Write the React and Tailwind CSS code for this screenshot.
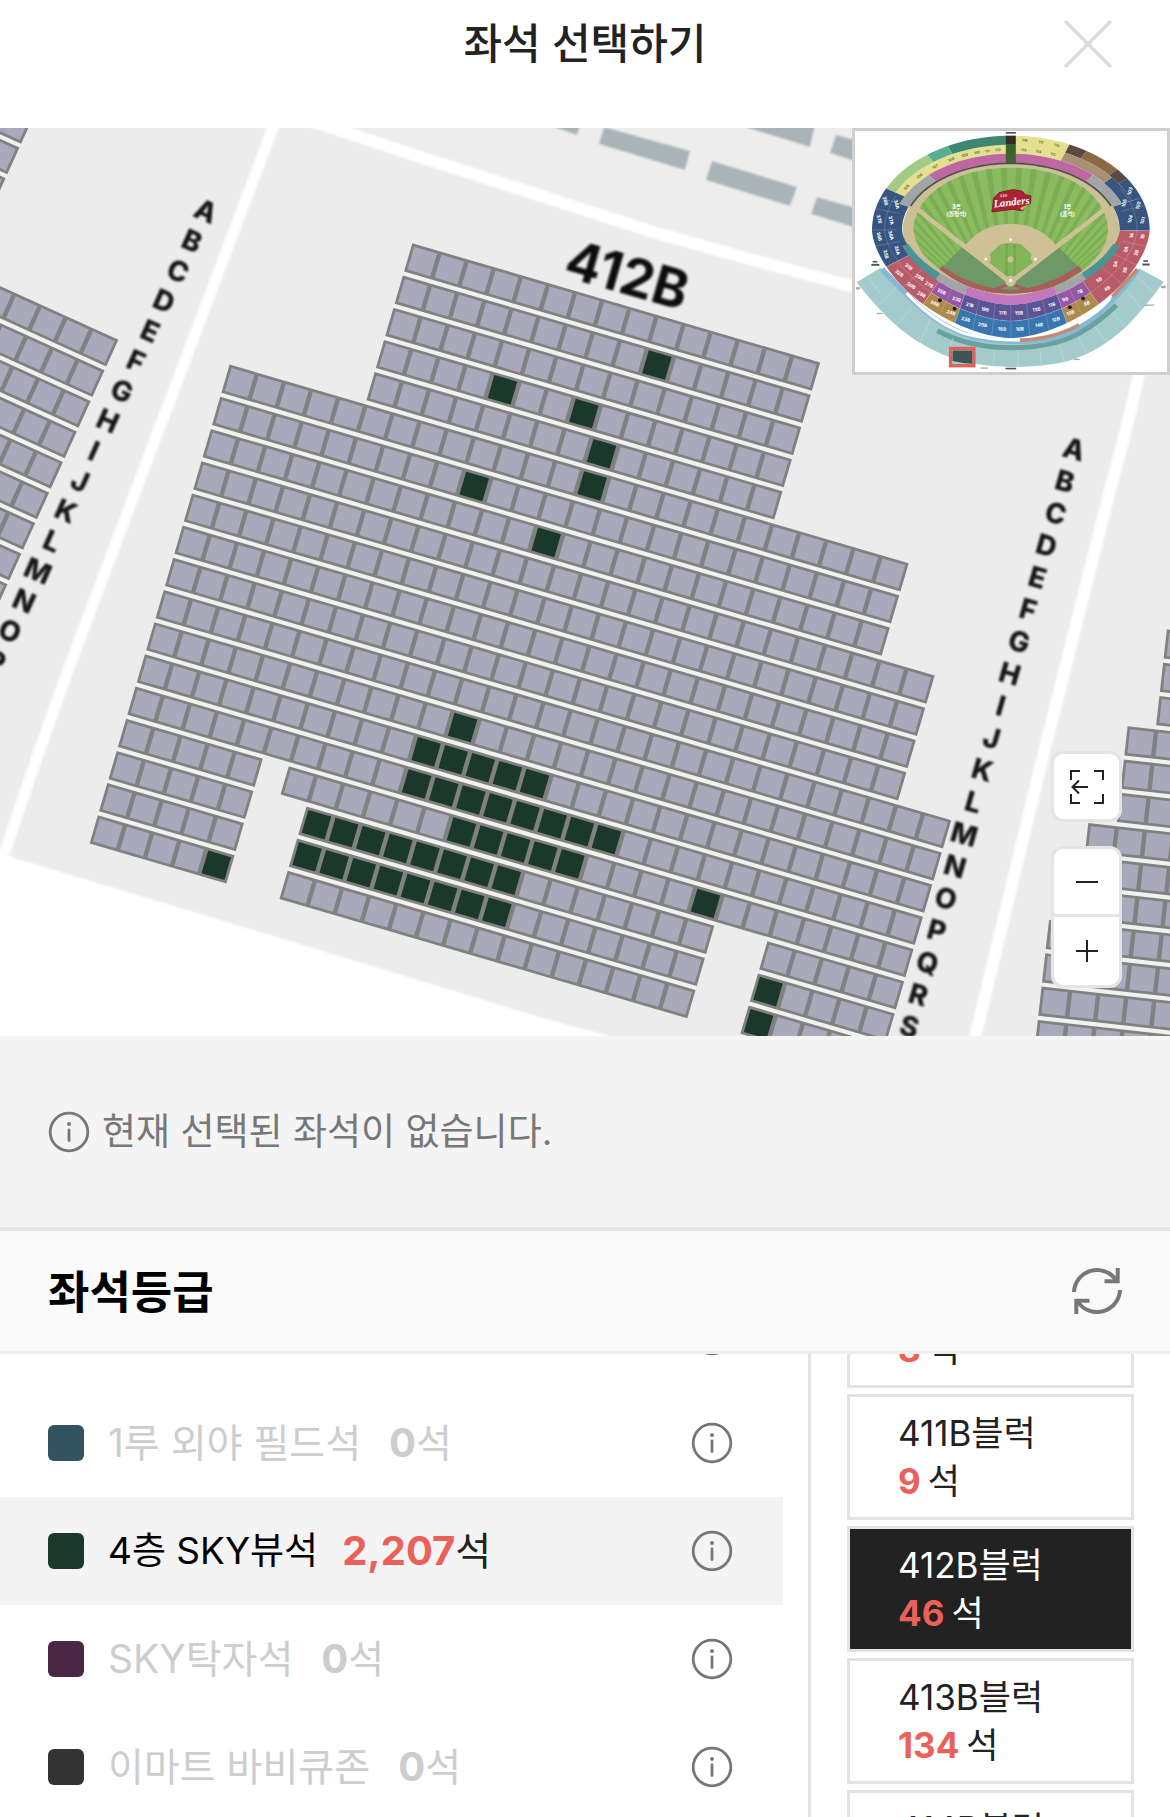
import React from "react";

const FONT = "font-[Inter,'Noto_Sans_CJK_KR',sans-serif]";

/* ---------- seat map ---------- */

const PITCH = 28.25;
const ROW = 33.54;
const SEAT = 29.4;

const range = (a, b) => Array.from({ length: b - a }, (_, i) => a + i);

const mainRows = range(0, 20).map((r) => {
  if (r < 5) return [[0, 15]];
  if (r < 8) return [[-5, 20]];
  if (r < 12) return [[-5, 22]];
  if (r < 16) return [[-5, 24]];
  if (r === 16) return [[-5, 0], [1, 24]];
  return [[-5, 0], [2, 17], [19, 24]];
});

const openSeats = {
  1: [9],
  3: [4, 7],
  4: [8],
  5: [8],
  6: [4],
  7: [7],
  13: [6],
  14: range(5, 10),
  15: range(5, 13),
  16: [...range(7, 12), 16],
  17: range(2, 10),
  18: [...range(2, 10), 19],
  19: [-1, 19],
};

const leftRows = range(-5, 10).map((r) => (r < 0 ? [[-14, -6]] : [[-14, 0]]));
const rightRows = range(-3, 11).map((r) => {
  if (r < 0) return [[1, 5]];
  if (r < 3) return [[0, 6]];
  if (r < 6) return [[-1, 6]];
  return [[-2, 7]];
});

function SeatBlock({ x, y, angle, rows, firstRow = 0, open = {} }) {
  return (
    <g transform={`translate(${x} ${y}) rotate(${angle})`}>
      {rows.map((segs, i) => {
        const r = firstRow + i;
        const next = rows[i + 1] || [];
        return segs.map(([a, b]) => (
          <g key={`${r}:${a}`}>
            {next.map(([c, d]) => {
              const s = Math.max(a, c);
              const e = Math.min(b, d);
              return e > s ? (
                <rect key={c} x={s * PITCH} y={r * ROW + 28} width={(e - s) * PITCH + 1} height={7} fill="#f1f1ef" />
              ) : null;
            })}
            <rect x={a * PITCH} y={r * ROW} width={(b - a) * PITCH + 1.2} height={SEAT} fill="#818181" />
            {range(a, b).map((c) => (
              <rect
                key={c}
                x={c * PITCH + 2.8}
                y={r * ROW + 2.8}
                width={SEAT - 5.6}
                height={SEAT - 5.6}
                fill={(open[r] || []).includes(c) ? "#1b392b" : "#a8aabc"}
              />
            ))}
          </g>
        ));
      })}
    </g>
  );
}

function RowLetters({ letters, x, y, dx, dy, angle }) {
  return letters.split("").map((ch, i) => (
    <text
      key={ch}
      transform={`translate(${x + dx * i} ${y + dy * i}) rotate(${angle})`}
      textAnchor="middle"
      y="10"
      fontSize="28"
      fontWeight="800"
      fill="#161616"
    >
      {ch}
    </text>
  ));
}

function SeatMap() {
  return (
    <svg viewBox="0 128 1170 908" className="block h-auto w-full" fontFamily="Inter, sans-serif" role="img" aria-label="412B">
      <defs>
        <filter id="soft" x="-5%" y="-5%" width="110%" height="110%">
          <feGaussianBlur stdDeviation="0.9" />
        </filter>
      </defs>
      <rect x="0" y="128" width="1170" height="908" fill="#ececec" />
      <g filter="url(#soft)">
        <path d="M300 118 L420 157 L570 204 L851 284 L1200 370 L1200 100 Z" fill="#ededed" />
        <path d="M-20 838 Q2 850 14 858 L240 926 L500 1005 Q560 1024 625 1040 L625 1060 L-20 1060 Z" fill="#fff" />
        <g fill="none" stroke="#fff">
          <path d="M276 120 L102 580 Q50 715 5 852" strokeWidth="11" />
          <path d="M290 114 L420 157 L520 189 L653 232 L753 260 L870 291" strokeWidth="12" />
          <path d="M1140 370 Q1128 425 1110 490 L1043 756 L972 1050" strokeWidth="12" />
        </g>
        <g fill="#a9b4b8">
          <path d="M540 122 L580 126 L577 135 Z" />
          <path d="M604 127 L690 151 L685 170 L599 144 Z" />
          <path d="M712 161 L797 187 L790 206 L706 180 Z" />
          <path d="M817 197 L870 212 L870 232 L811 214 Z" />
          <path d="M735 120 L815 124 L810 147 L748 128 Z" />
          <path d="M836 135 L870 144 L870 166 L830 153 Z" />
        </g>
      </g>
      <SeatBlock x={412.3} y={243.3} angle={16.3} rows={mainRows} open={openSeats} />
      <SeatBlock x={117.3} y={339.3} angle={24.4} rows={leftRows} firstRow={-5} />
      <SeatBlock x={1127.6} y={726.2} angle={6.4} rows={rightRows} firstRow={-3} />
      <g filter="url(#soft)">
        <RowLetters letters="ABCDEFGHIJKLMNOP" x={206} y={211} dx={-14} dy={30} angle={24} />
        <RowLetters letters="ABCDEFGHIJKLMNOPQRS" x={1074} y={449} dx={-9.15} dy={32.1} angle={16} />
        <text transform="translate(562 276) rotate(16)" fontSize="53" fontWeight="700" fill="#0c0c0c">
          412B
        </text>
      </g>
    </svg>
  );
}

/* ---------- stadium overview ---------- */

const CX = 513;
const CY = 330;

function at(t, deg) {
  const a = (deg * Math.PI) / 180;
  const c = Math.cos(a);
  const s = Math.sin(a);
  const rx = 322 + 95 * t;
  if (s < 0) return [CX + rx * c, CY + (200 + 83 * t) * s];
  return [CX + rx * Math.sign(c) * Math.abs(c) ** 1.2, CY + (197 + 128 * t) * s ** 1.2];
}

function ring(t0, t1, from, to) {
  const n = Math.max(2, Math.ceil(Math.abs(to - from) / 3));
  const steps = range(0, n + 1).map((i) => from + ((to - from) * i) / n);
  const pts = [...steps.map((d) => at(t1, d)), ...steps.reverse().map((d) => at(t0, d))];
  return pts.map((p) => p.map((v) => v.toFixed(1)).join(",")).join(" ");
}

const sectors = [
  [0.35, 0.67, -154, -92, "#e3e18d"],
  [0.67, 1, -154, -127, "#a5ca86"],
  [0.67, 1, -127, -117, "#58ae90"],
  [0.67, 1, -117, -92, "#3f8573"],
  [0.35, 1, -88, -65, "#e3e18d"],
  [0.67, 1, -65, -57, "#5a4a42"],
  [0.67, 1, -57, -40, "#8b6a43"],
  [0.67, 1, -40, -33, "#5a4a42"],
  [0.35, 0.67, -65, -38, "#a98f73"],
  [0.02, 0.35, -134, -92, "#bf67a2"],
  [0.02, 0.35, -88, -46, "#bf67a2"],
  [0.02, 0.35, -160, -134, "#a2a4a8"],
  [0.02, 0.35, -46, -20, "#a2a4a8"],
  [0.35, 1, 200, 206, "#37557f"],
  [0.05, 1, 156, 200, "#37557f"],
  [0.35, 0.67, -38, -20, "#37557f"],
  [0.67, 1, -33, -20, "#37557f"],
  [0.05, 1, -20, 1, "#37557f"],
  [0.05, 1, 1, 47, "#b85c69"],
  [0.05, 1, 133, 156, "#b85c69"],
  [0, 0.22, 16, 45, "#4a9494"],
  [0, 0.22, 135, 164, "#4a9494"],
  [0, 0.22, 45, 62, "#a2a4a8"],
  [0, 0.22, 118, 135, "#a2a4a8"],
  [0, 0.22, 62, 118, "#c477bc"],
  [0.22, 0.6, 47, 62, "#9657a6"],
  [0.22, 0.6, 118, 133, "#9657a6"],
  [0.22, 0.6, 62, 118, "#5b5496"],
  [0.6, 1, 47, 62, "#ae8b4d"],
  [0.6, 1, 118, 133, "#ae8b4d"],
  [0.6, 1, 62, 118, "#3a76ae"],
];

const spokes = [-15, 1, 12, 23, 34, 47, 55, 62, 70, 79, 90, 101, 110, 118, 125, 133, 144, 156, 168, 180, 193];

const overviewLabels = [
  ["22B", 0.8, 114], ["20B", 0.8, 106], ["18B", 0.8, 96], ["16B", 0.8, 84], ["14B", 0.8, 74], ["12B", 0.8, 66],
  ["21B", 0.42, 114], ["19B", 0.42, 106], ["17B", 0.42, 96], ["15B", 0.42, 84], ["13B", 0.42, 74], ["11B", 0.42, 66],
  ["26B", 0.8, 129], ["24B", 0.8, 121], ["10B", 0.8, 59], ["8B", 0.8, 51],
  ["25B", 0.42, 129], ["23B", 0.42, 121], ["9B", 0.42, 59], ["7B", 0.42, 51],
  ["32B", 0.8, 150], ["30B", 0.8, 142], ["28B", 0.8, 136], ["31B", 0.45, 150], ["29B", 0.45, 142], ["27B", 0.45, 136],
  ["1B", 0.8, 6], ["2B", 0.8, 17], ["3B", 0.8, 28], ["4B", 0.8, 40], ["1A", 0.45, 6], ["2A", 0.45, 17], ["3A", 0.45, 28], ["5B", 0.45, 40],
  ["35B", 0.8, 162], ["36B", 0.8, 174], ["37B", 0.8, 187], ["38B", 0.8, 199], ["35A", 0.42, 162], ["36A", 0.42, 174], ["37A", 0.42, 187], ["38A", 0.42, 199],
  ["101", 0.8, -6], ["102", 0.8, -16], ["103", 0.8, -26], ["104", 0.42, -8], ["105", 0.42, -20],
];

const yellowLabels = [
  ["105", 0.5, -148], ["106", 0.5, -138], ["107", 0.5, -128], ["108", 0.5, -119], ["109", 0.5, -112], ["110", 0.5, -106],
  ["111", 0.5, -101], ["112", 0.5, -96], ["113", 0.5, -84], ["114", 0.5, -77], ["115", 0.5, -70],
  ["116", 0.85, -84], ["117", 0.85, -77], ["118", 0.85, -70],
];

function Overview() {
  const grass =
    "M221 330 C222 230 340 143 512 143 C690 143 804 230 805 330 C800 390 760 430 712 465 C650 505 590 520 512 522 C430 520 370 500 315 460 C265 425 228 390 221 330 Z";
  return (
    <svg viewBox="45 33 937 723" className="block h-auto w-full" fontFamily="Inter, 'Noto Sans CJK KR', sans-serif" textAnchor="middle" role="img" aria-label="Landers">
      <defs>
        <clipPath id="grassClip">
          <path d={grass} />
        </clipPath>
      </defs>
      <path
        d="M50 487 L122 444 Q160 480 205 525 Q300 615 380 645 Q450 670 540 668 Q640 664 700 640 Q780 600 830 535 L898 445 L972 486 Q920 560 860 620 Q770 705 660 730 Q590 742 512 742 Q400 740 310 705 Q220 668 150 600 Q90 540 50 487 Z"
        fill="#a3cbcb"
      />
      <g fill="none">
        <path d="M126 448 Q170 495 215 538 Q300 622 395 650 Q450 665 540 665 Q640 662 700 634 Q790 590 895 450" stroke="#86b9d6" strokeWidth="16" />
        <path d="M540 662 Q650 655 718 615 M818 530 L893 448" stroke="#c28b75" strokeWidth="11" />
        <path d="M292 633 Q390 684 512 684 Q640 684 720 640 Q780 605 830 556" stroke="#6aa19f" strokeWidth="15" />
        <path d="M200 520 Q290 615 380 643 Q450 662 540 661" stroke="#fff" strokeWidth="9" />
        <path d="M720 608 Q780 575 812 535" stroke="#fff" strokeWidth="9" />
        <path
          d="M80 465 L120 520 M110 560 L170 500 M170 615 L215 565 M240 670 L270 600 M318 706 L340 655 M390 730 L400 680 M460 740 L465 690 M535 742 L535 690 M605 738 L600 690 M675 727 L660 680 M740 700 L715 655 M800 665 L765 620 M855 620 L820 580 M905 565 L860 510 M945 520 L890 470"
          stroke="#c1dddd"
          strokeWidth="2"
        />
      </g>
      <path d="M192 330 C195 220 330 133 512 133 C700 133 832 220 835 330 C830 400 790 440 730 480 C650 525 590 530 512 530 C430 530 360 510 300 470 C240 430 195 400 192 330 Z" fill="#cbbf96" stroke="#cbbf96" strokeWidth="8" />
      <path d={grass} fill="#8abb5f" />
      <g clipPath="url(#grassClip)">
        {range(0, 26).map((i) => (
          <path key={i} d={`M${-120 + i * 50} 100 l20 0 L512 620 Z`} fill="#7aae54" />
        ))}
        <path d="M368 380 L300 450 L420 525 L512 530 L620 525 L725 450 L655 380 L512 490 Z" fill="#6f9867" />
        <path d="M300 445 Q400 515 512 520 Q620 515 722 445" fill="none" stroke="#a85f5b" strokeWidth="18" />
        <path d="M512 490 L440 520 M512 490 L585 520" stroke="#a85f5b" strokeWidth="10" />
      </g>
      <path d="M375 378 Q425 312 512 312 Q600 312 650 378 L512 492 Z" fill="#cfc197" />
      <path d="M232 268 L512 488 L795 268" fill="none" stroke="#cfc197" strokeWidth="14" />
      <path d="M482 373 Q512 366 544 373 L576 404 Q568 416 580 428 L512 478 L448 428 Q458 416 448 404 Z" fill="#84b659" />
      <path d="M500 372 V466 M524 372 V466" stroke="#76a94f" strokeWidth="8" />
      <circle cx="512" cy="419" r="9" fill="#cfc197" />
      <circle cx="512" cy="484" r="16" fill="#cfc197" />
      <g fill="#fff">
        <circle cx="512" cy="359" r="4" />
        <circle cx="438" cy="418" r="4" />
        <circle cx="587" cy="418" r="4" />
        <circle cx="512" cy="482" r="5" />
      </g>
      {sectors.map(([a, b, c, d, fill]) => (
        <polygon key={`${a}:${b}:${c}`} points={ring(a, b, c, d)} fill={fill} />
      ))}
      <g stroke="#fff" strokeOpacity="0.35" strokeWidth="1.5">
        {spokes.map((d) => {
          const [x1, y1] = at(0.22, d);
          const [x2, y2] = at(1, d);
          return <line key={d} x1={x1} y1={y1} x2={x2} y2={y2} />;
        })}
        <polyline points={range(-10, 69).map((i) => at(0.6, i * 3).join(",")).join(" ")} fill="none" />
      </g>
      <rect x="498" y="47" width="30" height="26" fill="#332b28" />
      <rect x="498" y="72" width="30" height="58" fill="#3d6429" />
      <polyline points={range(-53, -6).map((i) => at(0, i * 3).join(",")).join(" ")} fill="none" stroke="#44564a" strokeWidth="5" />
      {overviewLabels.map(([s, t, d]) => {
        const [x, y] = at(t, d);
        const side = d > 150 || d < 35;
        const rot = side ? (d > 90 ? 75 : -75) : (90 - d) * -0.6;
        return (
          <text key={s + t} transform={`translate(${x} ${y}) rotate(${rot})`} y="5" fontSize="14" fontWeight="700" fill="#fff">
            {s}
          </text>
        );
      })}
      {yellowLabels.map(([s, t, d]) => {
        const [x, y] = at(t, d);
        return (
          <text key={s} transform={`translate(${x} ${y}) rotate(${(d + 90) * 0.8})`} y="4" fontSize="11" fontWeight="700" fill="#6b6a3c">
            {s}
          </text>
        );
      })}
      <g fill="#222">
        <circle cx="300" cy="541" r="6" />
        <circle cx="344" cy="567" r="6" />
        <circle cx="730" cy="536" r="6" />
        <circle cx="690" cy="562" r="6" />
      </g>
      <g fill="#fff" fontSize="17" fontWeight="700">
        <text x="350" y="268">3루</text>
        <text x="350" y="289">(원정석)</text>
        <text x="683" y="268">1루</text>
        <text x="683" y="289">(홈석)</text>
      </g>
      <path d="M460 236 L478 218 L520 209 L548 214 L556 224 L573 228 L572 250 L556 256 L549 273 L520 268 L456 276 L460 250 Z" fill="#a92432" stroke="#8c1c2b" strokeWidth="3" />
      <text transform="translate(516 257) rotate(-6)" fontFamily="'Liberation Serif', serif" fontSize="32" fontWeight="700" fontStyle="italic" fill="#fff">
        Landers
      </text>
      <text transform="translate(492 231) rotate(-6)" fontSize="11" fontWeight="700" fill="#f0c8c8">
        SSG
      </text>
      <path d="M540 264 L560 256 L548 272 Z" fill="#e7bb5a" />
      <g fill="#555">
        <rect x="498" y="36" width="30" height="5" />
        <rect x="98" y="423" width="14" height="5" />
        <rect x="94" y="432" width="24" height="6" />
        <rect x="911" y="421" width="14" height="5" />
        <rect x="908" y="431" width="22" height="6" />
        <rect x="497" y="744" width="32" height="5" />
      </g>
      <g fill="#aaa">
        <rect x="48" y="502" width="12" height="7" />
        <rect x="964" y="498" width="14" height="7" />
        <rect x="916" y="554" width="28" height="4" />
        <rect x="110" y="579" width="18" height="4" />
        <rect x="702" y="717" width="18" height="4" />
        <rect x="422" y="743" width="22" height="4" />
      </g>
      <rect x="332" y="686" width="70" height="52" fill="#a3cbcb" stroke="#e2605a" strokeWidth="10" />
      <path d="M338 692 H397 V732 L370 730 L338 724 Z" fill="#3e5455" />
    </svg>
  );
}

/* ---------- icons ---------- */

function InfoIcon() {
  return (
    <svg viewBox="0 0 42 42" className="size-[42px] shrink-0" fill="none" stroke="#777" strokeLinecap="round" aria-hidden="true">
      <circle cx="21" cy="21" r="18.8" strokeWidth="2.8" />
      <path d="M21 19 V29.5" strokeWidth="2.8" />
      <circle cx="21" cy="13" r="2" fill="#777" stroke="none" />
    </svg>
  );
}

function CloseIcon() {
  return (
    <svg viewBox="0 0 48 48" className="size-12" fill="none" stroke="#dcdcdc" strokeWidth="3.5" aria-hidden="true">
      <path d="M1 1 L47 47 M47 1 L1 47" />
    </svg>
  );
}

function RefreshIcon() {
  return (
    <svg viewBox="0 0 50 50" className="size-[50px]" fill="none" stroke="#777" strokeWidth="4" aria-hidden="true">
      <path d="M2 26 A23 23 0 0 1 44 14" />
      <path d="M32.5 15.2 H45.7 V2" />
      <path d="M48 24 A23 23 0 0 1 6 36" />
      <path d="M17.5 34.8 H4.3 V48" />
    </svg>
  );
}

function FitIcon() {
  return (
    <svg viewBox="0 0 34 34" className="size-[34px]" fill="none" stroke="#222" strokeWidth="2" aria-hidden="true">
      <path d="M1 10 V1 H10 M24 1 H33 V10 M33 24 V33 H24 M10 33 H1 V24" />
      <path d="M18 17 H2.5 M9 10.5 L2.5 17 L9 23.5" />
    </svg>
  );
}

/* ---------- lists ---------- */

const grades = [
  { name: "3루 외야 필드석", count: "0", color: "bg-[#6b4a2f]" },
  { name: "1루 외야 필드석", count: "0", color: "bg-[#335362]" },
  { name: "4층 SKY뷰석", count: "2,207", color: "bg-[#1b392b]", active: true },
  { name: "SKY탁자석", count: "0", color: "bg-[#4b2746]" },
  { name: "이마트 바비큐존", count: "0", color: "bg-[#333333]" },
];

const blocks = [
  { name: "410B블럭", count: 8 },
  { name: "411B블럭", count: 9 },
  { name: "412B블럭", count: 46, active: true },
  { name: "413B블럭", count: 134 },
  { name: "414B블럭", count: 120 },
];

function GradeRow({ name, count, color, active }) {
  return (
    <li className={`flex h-[108px] items-center pl-12 pr-[50px] ${active ? "bg-[#f4f4f4]" : ""}`}>
      <button type="button" className="flex min-w-0 flex-1 items-center text-left leading-[48px]">
        <span className={`size-9 shrink-0 rounded-md ${color}`} />
        <span className={`ml-6 ${active ? "text-[37px] text-black" : "text-[39px] text-[#cdcdcd]"}`}>{name}</span>
        <span className={`text-[40px] ${active ? "ml-6 text-[#222]" : "ml-7 text-[#cdcdcd]"}`}>
          <strong className={`font-bold ${active ? "text-[#eb6159]" : ""}`}>{count}</strong>
          <span className="text-[39px]">석</span>
        </span>
      </button>
      <button type="button" aria-label={`${name} 정보`}>
        <InfoIcon />
      </button>
    </li>
  );
}

function BlockCard({ name, count, active }) {
  return (
    <button
      type="button"
      aria-pressed={!!active}
      className={`block w-full shrink-0 border-[3px] border-[#e3e3e3] py-3 pl-12 text-left text-[35px] leading-[48px] ${
        active ? "bg-[#222] text-white" : "bg-white text-[#222]"
      }`}
    >
      <span className="block">{name}</span>
      <span className="flex gap-[7px]">
        <strong className="font-bold text-[#eb6159]">{count}</strong>
        <span>석</span>
      </span>
    </button>
  );
}

export default function App() {
  return (
    <div className={`flex h-screen flex-col overflow-hidden bg-white text-[#222] ${FONT}`}>
      <header className="grid h-32 shrink-0 grid-cols-[1fr_auto_1fr] items-start px-[58px]">
        <h1 className="col-start-2 mt-3.5 text-[42px] font-medium leading-[60px]">좌석 선택하기</h1>
        <button type="button" aria-label="닫기" className="mt-5 justify-self-end">
          <CloseIcon />
        </button>
      </header>

      <section className="relative shrink-0 overflow-hidden">
        <SeatMap />
        <div className="absolute right-0 top-0 w-[318px] border-[3px] border-[#cfcfcf] bg-white">
          <Overview />
        </div>
        <div className="absolute bottom-12 right-12 flex w-[71px] flex-col gap-6">
          <button
            type="button"
            aria-label="전체 보기"
            className="flex h-[71px] items-center justify-center rounded-xl border-[3px] border-[#e4e4e4] bg-white"
          >
            <FitIcon />
          </button>
          <div className="flex flex-col rounded-xl border-[3px] border-[#e4e4e4] bg-white">
            <button type="button" aria-label="축소" className="flex h-[68px] items-center justify-center border-b-[3px] border-[#e4e4e4]">
              <svg viewBox="0 0 22 22" className="size-[22px]" stroke="#222" strokeWidth="2" aria-hidden="true">
                <path d="M0 11 H22" />
              </svg>
            </button>
            <button type="button" aria-label="확대" className="flex h-[68px] items-center justify-center">
              <svg viewBox="0 0 22 22" className="size-[22px]" stroke="#222" strokeWidth="2" aria-hidden="true">
                <path d="M0 11 H22 M11 0 V22" />
              </svg>
            </button>
          </div>
        </div>
      </section>

      <section className="flex h-[195px] shrink-0 items-center gap-3 border-b-[4px] border-[#e5e5e5] bg-[#f4f4f4] px-12 text-[37px] text-[#777]">
        <InfoIcon />
        <p>현재 선택된 좌석이 없습니다.</p>
      </section>

      <section className="flex h-[123px] shrink-0 items-center justify-between border-b-[3px] border-[#eee] bg-[#fafafa] px-12">
        <h2 className="pt-1 text-[45px] font-bold text-black">좌석등급</h2>
        <button type="button" aria-label="새로고침">
          <RefreshIcon />
        </button>
      </section>

      <div className="flex min-h-0 flex-1 overflow-hidden">
        <ul className="-mt-[73px] mr-[25px] min-w-0 flex-1">
          {grades.map((g) => (
            <GradeRow key={g.name} {...g} />
          ))}
        </ul>
        <div className="w-[362px] shrink-0 border-l-[3px] border-[#e3e3e3] pl-9 pr-9">
          <div className="-mt-[92px] flex flex-col gap-1.5">
            {blocks.map((b) => (
              <BlockCard key={b.name} {...b} />
            ))}
          </div>
        </div>
      </div>
    </div>
  );
}
